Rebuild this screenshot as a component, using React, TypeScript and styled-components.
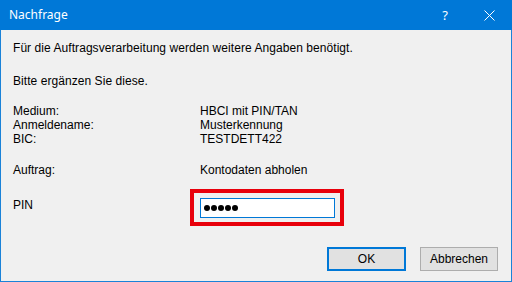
import React from 'react'
import { type ReactElement } from 'react'
import styled, { createGlobalStyle } from 'styled-components'

const GlobalStyle = createGlobalStyle`
  html, body {
    margin: 0;
    padding: 0;
    background: #f0f0f0;
  }
`

const Window = styled.div`
  width: 512px;
  height: 282px;
  box-sizing: border-box;
  border: 1px solid #1a82d8;
  border-top: none;
  background: #f0f0f0;
  display: flex;
  flex-direction: column;
  font-family: 'Liberation Sans', Arial, sans-serif;
  font-size: 12px;
  color: #000;
`

const TitleBar = styled.div`
  height: 30px;
  margin: 0 -1px;
  background: #0078d7;
  color: #fff;
  display: flex;
  align-items: center;
  padding-left: 9px;
  font-family: 'Noto Sans', 'Open Sans', sans-serif;
  font-size: 12px;
`

const Title = styled.span`
  flex: 1;
  padding-bottom: 1px;
`

const TitleButton = styled.div`
  width: 46px;
  height: 30px;
  display: flex;
  align-items: center;
  justify-content: center;
`

const HelpMark = styled.span`
  font-size: 13px;
  margin-left: 4px;
`

const Body = styled.div`
  flex: 1;
  display: flex;
  flex-direction: column;
  padding: 11px 13px 10px 12px;
  line-height: 14px;
`

const Paragraph = styled.p<{ $gap: number }>`
  margin: 0 0 ${p => p.$gap}px 0;
  letter-spacing: 0.06px;
`

const InfoGrid = styled.div<{ $gap: number }>`
  display: grid;
  grid-template-columns: 187px 1fr;
  margin-bottom: ${p => p.$gap}px;
`

const PinRow = styled.div`
  display: flex;
  align-items: flex-start;
  margin-top: 12px;
`

const PinLabel = styled.span`
  width: 177px;
  padding-top: 9px;
`

const Highlight = styled.div`
  border: 4px solid #e8000b;
  padding: 5px 5px 4px 6px;
`

const PinInput = styled.div`
  width: 130px;
  height: 18px;
  border: 1px solid #0078d7;
  background: #fff;
  display: flex;
  align-items: center;
  padding-left: 3px;
  gap: 1px;
`

const Dot = styled.span`
  width: 6px;
  height: 6px;
  border-radius: 50%;
  background: #000;
`

const ButtonRow = styled.div`
  margin-top: auto;
  display: flex;
  justify-content: flex-end;
  gap: 14px;
`

const Button = styled.div<{ $default?: boolean }>`
  width: ${p => (p.$default ? 79 : 78)}px;
  height: 24px;
  box-sizing: border-box;
  background: #e1e1e1;
  border: ${p => (p.$default ? '2px solid #0078d7' : '1px solid #adadad')};
  display: flex;
  align-items: center;
  justify-content: center;
`

export default function App (): ReactElement {
  return (
    <>
      <GlobalStyle />
      <Window>
        <TitleBar>
          <Title>Nachfrage</Title>
          <TitleButton><HelpMark>?</HelpMark></TitleButton>
          <TitleButton>
            <svg width="11" height="11" viewBox="0 0 11 11">
              <path d="M0.5 0.5 L10.5 10.5 M10.5 0.5 L0.5 10.5" stroke="#fff" strokeWidth="1" />
            </svg>
          </TitleButton>
        </TitleBar>
        <Body>
          <Paragraph $gap={19}>Für die Auftragsverarbeitung werden weitere Angaben benötigt.</Paragraph>
          <Paragraph $gap={16}>Bitte ergänzen Sie diese.</Paragraph>
          <InfoGrid $gap={17}>
            <span>Medium:</span><span>HBCI mit PIN/TAN</span>
            <span>Anmeldename:</span><span>Musterkennung</span>
            <span>BIC:</span><span>TESTDETT422</span>
          </InfoGrid>
          <InfoGrid $gap={0}>
            <span>Auftrag:</span><span>Kontodaten abholen</span>
          </InfoGrid>
          <PinRow>
            <PinLabel>PIN</PinLabel>
            <Highlight>
              <PinInput>
                <Dot /><Dot /><Dot /><Dot /><Dot />
              </PinInput>
            </Highlight>
          </PinRow>
          <ButtonRow>
            <Button $default>OK</Button>
            <Button>Abbrechen</Button>
          </ButtonRow>
        </Body>
      </Window>
    </>
  )
}
